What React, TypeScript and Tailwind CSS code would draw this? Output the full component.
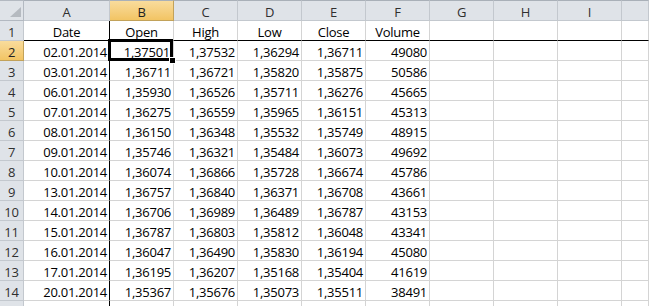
import React from "react";

const letters = ["A", "B", "C", "D", "E", "F", "G", "H", "I", ""];

const titles = ["Date", "Open", "High", "Low", "Close", "Volume"];

const rows = [
  ["02.01.2014", "1,37501", "1,37532", "1,36294", "1,36711", "49080"],
  ["03.01.2014", "1,36711", "1,36721", "1,35820", "1,35875", "50586"],
  ["06.01.2014", "1,35930", "1,36526", "1,35711", "1,36276", "45665"],
  ["07.01.2014", "1,36275", "1,36559", "1,35965", "1,36151", "45313"],
  ["08.01.2014", "1,36150", "1,36348", "1,35532", "1,35749", "48915"],
  ["09.01.2014", "1,35746", "1,36321", "1,35484", "1,36073", "49692"],
  ["10.01.2014", "1,36074", "1,36866", "1,35728", "1,36674", "45786"],
  ["13.01.2014", "1,36757", "1,36840", "1,36371", "1,36708", "43661"],
  ["14.01.2014", "1,36706", "1,36989", "1,36489", "1,36787", "43153"],
  ["15.01.2014", "1,36787", "1,36803", "1,35812", "1,36048", "43341"],
  ["16.01.2014", "1,36047", "1,36490", "1,35830", "1,36194", "45080"],
  ["17.01.2014", "1,36195", "1,36207", "1,35168", "1,35404", "41619"],
  ["20.01.2014", "1,35367", "1,35676", "1,35073", "1,35511", "38491"],
];

const headCell = "flex items-end justify-center border-r border-b border-[#c3c8ce] bg-[#dfe3e8] text-[#2f2f2f] leading-[16px]";
const hotHead = "flex items-end justify-center border-r border-b border-[#c2a25a] bg-gradient-to-b from-[#f9dc9c] to-[#f2c463] text-[#222] leading-[16px]";
const gridCell = "flex items-end border-r border-b border-[#d4d4d4] bg-white leading-[16px] whitespace-nowrap";

export default function App() {
  // body rows: 1 = titles, 2..14 = data, 15 = empty (cut off by the window)
  const body: string[][] = [titles, ...rows, []];

  return (
    <div
      className="h-[306px] w-[649px] overflow-hidden bg-white text-[13px] tracking-[-0.25px] text-black"
      style={{ fontFamily: '"Open Sans", "Liberation Sans", sans-serif' }}
    >
      <div className="grid grid-cols-[24px_86px_repeat(8,64px)_27px] grid-rows-[21px_repeat(15,20px)]">
        {/* corner */}
        <div className="flex items-end justify-end border-r border-b border-t border-[#b3b9c1] bg-[#dfe3e8] pr-[1px] pb-[2px]">
          <svg width="12" height="11" viewBox="0 0 12 11">
            <polygon points="11,0 11,10 0,10" fill="#b5bac0" />
          </svg>
        </div>
        {letters.map((l, i) => (
          <div key={l + i} className={(i === 1 ? hotHead : headCell) + " border-t border-t-[#a9b0b8]"}>
            {l}
          </div>
        ))}

        {body.map((r, ri) => {
          const n = ri + 1;
          return (
            <React.Fragment key={n}>
              <div className={n === 2 ? hotHead : headCell}>{n < 15 ? n : ""}</div>
              {letters.map((_, ci) => {
                const v = r[ci] ?? "";
                let cls = gridCell;
                if (n === 1) cls += " justify-center border-b-black";
                else cls += " justify-end pr-[2px]";
                if (ci === 0) cls += " border-r-black";
                if (n === 2 && ci === 1) {
                  return (
                    <div key={ci} className={cls + " relative"}>
                      <span className="pr-[1px]">{v}</span>
                      <div className="absolute -top-[2px] -left-[2px] right-0 -bottom-[1px] border-[3px] border-black" />
                      <div className="absolute left-[59px] top-[16px] h-[7px] w-[7px] border border-white bg-black" />
                    </div>
                  );
                }
                return (
                  <div key={ci} className={cls}>
                    {v}
                  </div>
                );
              })}
            </React.Fragment>
          );
        })}
      </div>
    </div>
  );
}
